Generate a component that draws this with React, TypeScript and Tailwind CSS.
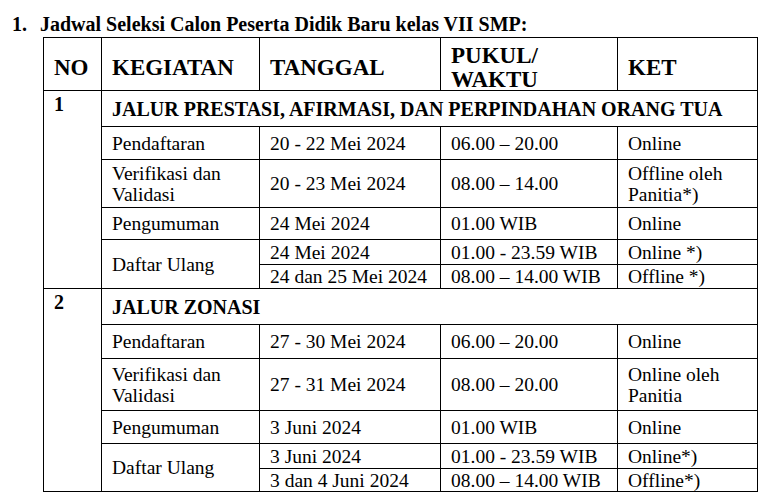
type Line = { tanggal: string; pukul: string; ket: string[] };
type Item = { kegiatan: string[]; lines: Line[] };
type Section = { no: string; title: string; items: Item[] };

const sections: Section[] = [
  {
    no: "1",
    title: "JALUR PRESTASI, AFIRMASI, DAN PERPINDAHAN ORANG TUA",
    items: [
      { kegiatan: ["Pendaftaran"], lines: [{ tanggal: "20 - 22 Mei 2024", pukul: "06.00 – 20.00", ket: ["Online"] }] },
      {
        kegiatan: ["Verifikasi dan", "Validasi"],
        lines: [{ tanggal: "20 - 23 Mei 2024", pukul: "08.00 – 14.00", ket: ["Offline oleh", "Panitia*)"] }],
      },
      { kegiatan: ["Pengumuman"], lines: [{ tanggal: "24 Mei 2024", pukul: "01.00 WIB", ket: ["Online"] }] },
      {
        kegiatan: ["Daftar Ulang"],
        lines: [
          { tanggal: "24 Mei 2024", pukul: "01.00 - 23.59 WIB", ket: ["Online *)"] },
          { tanggal: "24 dan 25 Mei 2024", pukul: "08.00 – 14.00 WIB", ket: ["Offline *)"] },
        ],
      },
    ],
  },
  {
    no: "2",
    title: "JALUR ZONASI",
    items: [
      { kegiatan: ["Pendaftaran"], lines: [{ tanggal: "27 - 30 Mei 2024", pukul: "06.00 – 20.00", ket: ["Online"] }] },
      {
        kegiatan: ["Verifikasi dan", "Validasi"],
        lines: [{ tanggal: "27 - 31 Mei 2024", pukul: "08.00 – 20.00", ket: ["Online oleh", "Panitia"] }],
      },
      { kegiatan: ["Pengumuman"], lines: [{ tanggal: "3 Juni 2024", pukul: "01.00 WIB", ket: ["Online"] }] },
      {
        kegiatan: ["Daftar Ulang"],
        lines: [
          { tanggal: "3 Juni 2024", pukul: "01.00 - 23.59 WIB", ket: ["Online*)"] },
          { tanggal: "3 dan 4 Juni 2024", pukul: "08.00 – 14.00 WIB", ket: ["Offline*)"] },
        ],
      },
    ],
  },
];

const spanClass: Record<number, string> = {
  1: "row-span-1",
  2: "row-span-2",
  6: "row-span-6",
};

const cell = "border-r border-b border-black flex items-center px-[10px]";
const head = `${cell} pt-[7px] text-[23px] leading-[24px] font-bold`;
const body = `${cell} text-[19.5px] leading-[21px] whitespace-nowrap`;

const App = () => {
  return (
    <div className="w-[768px] h-[494px] bg-white text-black font-['Liberation_Serif',serif] overflow-hidden">
      {/* Title */}
      <div className="h-[37px] pt-[13px] flex text-[20px] leading-[23px] font-bold">
        <span className="pl-[12px] w-[40px]">1.</span>
        <span>Jadwal Seleksi Calon Peserta Didik Baru kelas VII SMP:</span>
      </div>

      {/* Table */}
      <div className="ml-[43px] w-fit grid grid-cols-[58px_158px_181px_177px_140px] grid-rows-[53px_36px_33px_48px_32px_25px_24px_36px_34px_52px_33px_25px_23px] border-l border-t border-black">
        <div className={head}>NO</div>
        <div className={head}>KEGIATAN</div>
        <div className={head}>TANGGAL</div>
        <div className={head}>
          <div>
            <div>PUKUL/</div>
            <div>WAKTU</div>
          </div>
        </div>
        <div className={head}>KET</div>

        {sections.map((s) => {
          const total = 1 + s.items.reduce((n, it) => n + it.lines.length, 0);
          return [
            <div
              key={s.no + "-no"}
              className={`${spanClass[total]} border-r border-b border-black px-[10px] pt-[3px] text-[20px] leading-[20px] font-bold`}
            >
              {s.no}
            </div>,
            <div key={s.no + "-title"} className={`${cell} col-span-4 text-[20px] font-bold`}>
              {s.title}
            </div>,
            ...s.items.flatMap((it, i) => [
              <div key={`${s.no}-${i}-k`} className={`${body} ${spanClass[it.lines.length]}`}>
                <div>
                  {it.kegiatan.map((t) => (
                    <div key={t}>{t}</div>
                  ))}
                </div>
              </div>,
              ...it.lines.flatMap((l, j) => [
                <div key={`${s.no}-${i}-${j}-t`} className={body}>
                  {l.tanggal}
                </div>,
                <div key={`${s.no}-${i}-${j}-p`} className={body}>
                  {l.pukul}
                </div>,
                <div key={`${s.no}-${i}-${j}-c`} className={body}>
                  <div>
                    {l.ket.map((t) => (
                      <div key={t}>{t}</div>
                    ))}
                  </div>
                </div>,
              ]),
            ]),
          ];
        })}
      </div>
    </div>
  );
};

export default App;
